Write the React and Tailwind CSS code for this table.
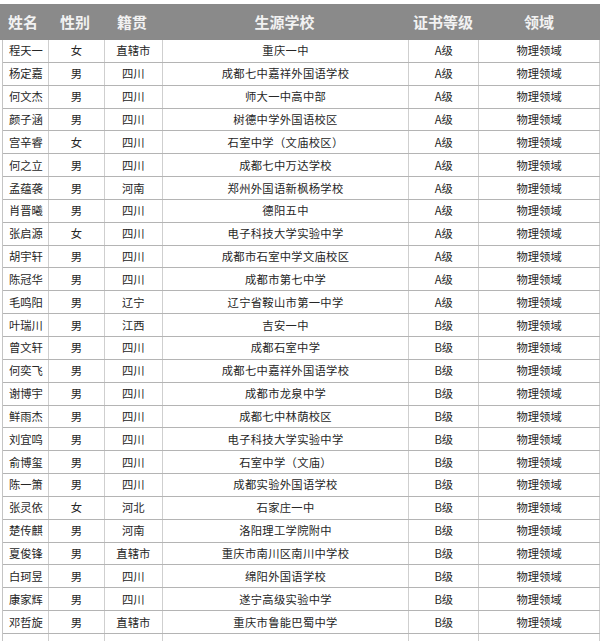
const rows = [
  ["程天一", "女", "直辖市", "重庆一中", "A级"],
  ["杨定嘉", "男", "四川", "成都七中嘉祥外国语学校", "A级"],
  ["何文杰", "男", "四川", "师大一中高中部", "A级"],
  ["颜子涵", "男", "四川", "树德中学外国语校区", "A级"],
  ["宫辛睿", "女", "四川", "石室中学（文庙校区）", "A级"],
  ["何之立", "男", "四川", "成都七中万达学校", "A级"],
  ["孟蕴袭", "男", "河南", "郑州外国语新枫杨学校", "A级"],
  ["肖晋曦", "男", "四川", "德阳五中", "A级"],
  ["张启源", "女", "四川", "电子科技大学实验中学", "A级"],
  ["胡宇轩", "男", "四川", "成都市石室中学文庙校区", "A级"],
  ["陈冠华", "男", "四川", "成都市第七中学", "A级"],
  ["毛鸣阳", "男", "辽宁", "辽宁省鞍山市第一中学", "A级"],
  ["叶瑞川", "男", "江西", "吉安一中", "B级"],
  ["曾文轩", "男", "四川", "成都石室中学", "B级"],
  ["何奕飞", "男", "四川", "成都七中嘉祥外国语学校", "B级"],
  ["谢博宇", "男", "四川", "成都市龙泉中学", "B级"],
  ["鲜雨杰", "男", "四川", "成都七中林荫校区", "B级"],
  ["刘宜鸣", "男", "四川", "电子科技大学实验中学", "B级"],
  ["俞博玺", "男", "四川", "石室中学（文庙）", "B级"],
  ["陈一箫", "男", "四川", "成都实验外国语学校", "B级"],
  ["张灵依", "女", "河北", "石家庄一中", "B级"],
  ["楚传麒", "男", "河南", "洛阳理工学院附中", "B级"],
  ["夏俊锋", "男", "直辖市", "重庆市南川区南川中学校", "B级"],
  ["白珂昱", "男", "四川", "绵阳外国语学校", "B级"],
  ["康家辉", "男", "四川", "遂宁高级实验中学", "B级"],
  ["邓哲旋", "男", "直辖市", "重庆市鲁能巴蜀中学", "B级"],
  ["", "", "", "", ""],
];

const font = { fontFamily: '"Noto Sans CJK SC", "Noto Sans", sans-serif' };

export default function App() {
  return (
    <div className="w-[604px] h-[641px] overflow-hidden bg-white pt-[4px]" style={font}>
      {/* header band */}
      <div className="flex w-[600px] h-[36px] bg-[#8a8a8a] text-[#f2f2f2] text-[15px] font-bold items-center">
        <div className="w-[47px] pl-[8px]">姓名</div>
        <div className="w-[56px] text-center">性别</div>
        <div className="w-[58px] text-center">籍贯</div>
        <div className="w-[247px] text-center">生源学校</div>
        <div className="w-[70px] text-center">证书等级</div>
        <div className="w-[122px] text-center">领域</div>
      </div>

      <div className="ml-[2px] w-[598px] border-l border-[#c4c4c4] text-[11.3px] text-[#262626]">
        {rows.map((r, i) => (
          <div key={i} className="flex h-[22.85px] border-b border-[#b4b4b4] items-center">
            <div className="w-[45px] h-full flex items-center pl-[6px]">{r[0]}</div>
            <div className="w-[56px] h-full flex items-center justify-center border-l border-[#cfcfcf]">{r[1]}</div>
            <div className="w-[58px] h-full flex items-center justify-center border-l border-[#cfcfcf]">{r[2]}</div>
            <div className="w-[247px] h-full flex items-center justify-center border-l border-[#cfcfcf] tracking-[0.3px]">{r[3]}</div>
            <div className="w-[70px] h-full flex items-center justify-center border-l border-[#cfcfcf]">{r[4]}</div>
            <div className="w-[122px] h-full flex items-center justify-center border-l border-r border-[#cfcfcf]">{r[0] ? "物理领域" : ""}</div>
          </div>
        ))}
      </div>
    </div>
  );
}
